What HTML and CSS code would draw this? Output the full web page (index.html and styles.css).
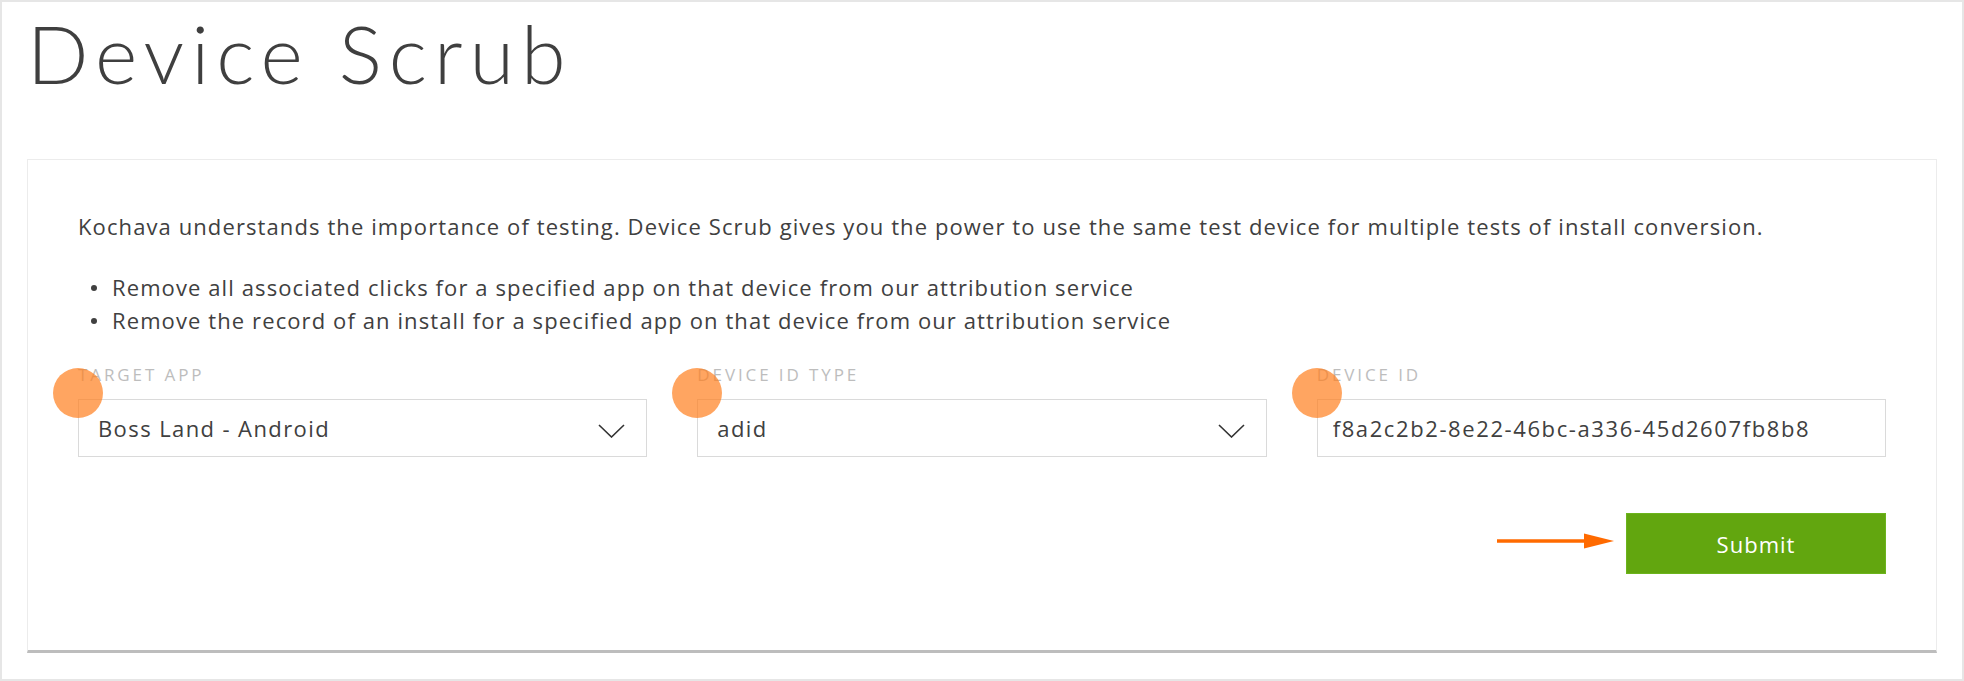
FILE: index.html
```html
<!DOCTYPE html>
<html lang="en">
<head>
<meta charset="UTF-8">
<meta name="viewport" content="width=device-width, initial-scale=1.0">
<title>Device Scrub</title>
<link rel="stylesheet" href="styles.css">
</head>
<body>

<div class="page">
    <h1 class="page-title">Device Scrub</h1>

    <div class="card">
        <p class="intro">Kochava understands the importance of testing. Device Scrub gives you the power to use the same test device for multiple tests of install conversion.</p>
        <ul class="points">
            <li>Remove all associated clicks for a specified app on that device from our attribution service</li>
            <li>Remove the record of an install for a specified app on that device from our attribution service</li>
        </ul>

        <form class="scrub-form" id="scrubForm">
            <div class="fields">
                <div class="field">
                    <span class="mark"></span>
                    <label class="field-label">TARGET APP</label>
                    <div class="select-box">
                        <span>Boss Land - Android</span>
                        <svg class="chevron" width="27" height="14" viewBox="0 0 27 14"><path d="M1 1 L13.5 13 L26 1" fill="none" stroke="#333" stroke-width="1.6"/></svg>
                    </div>
                </div>
                <div class="field">
                    <span class="mark"></span>
                    <label class="field-label">DEVICE ID TYPE</label>
                    <div class="select-box">
                        <span>adid</span>
                        <svg class="chevron" width="27" height="14" viewBox="0 0 27 14"><path d="M1 1 L13.5 13 L26 1" fill="none" stroke="#333" stroke-width="1.6"/></svg>
                    </div>
                </div>
                <div class="field">
                    <span class="mark"></span>
                    <label class="field-label" for="deviceId">DEVICE ID</label>
                    <input class="text-box" type="text" id="deviceId" value="f8a2c2b2-8e22-46bc-a336-45d2607fb8b8">
                </div>
            </div>

            <div class="actions">
                <svg class="pointer" width="117" height="16" viewBox="0 0 117 16">
                    <line x1="0" y1="8" x2="90" y2="8" stroke="#ff6a00" stroke-width="3.5"/>
                    <path d="M87 0.5 L117 8 L87 15.5 Z" fill="#ff6a00"/>
                </svg>
                <button type="button" class="submit">Submit</button>
            </div>
        </form>
    </div>
</div>

</body>
</html>
```

FILE: styles.css
```css
body {
    margin: 0;
    padding: 0;
    background: #fff;
    font-family: "Open Sans", Arial, sans-serif;
    color: #404040;
}

.page {
    height: 681px;
    box-sizing: border-box;
    border: 2px solid #e6e6e6;
    padding: 0 25px;
}

.page-title {
    margin: 10px 0 66px 0;
    font-family: Lato, "Open Sans", sans-serif;
    font-weight: 300;
    font-size: 81px;
    line-height: 81px;
    letter-spacing: 7px;
    color: #3f3f3f;
}

.card {
    border: 1px solid #ececec;
    border-bottom: 3px solid #bdbdbd;
    padding: 51px 50px 76px 50px;
}

.intro {
    margin: 0;
    font-size: 22px;
    line-height: 30px;
    letter-spacing: 1.1px;
}

.points {
    margin: 30px 0 0 0;
    padding: 0;
    list-style: none;
}

.points li {
    display: flex;
    align-items: center;
    font-size: 22px;
    line-height: 33px;
    letter-spacing: 1.1px;
}

.points li::before {
    content: "";
    flex: none;
    width: 6px;
    height: 6px;
    border-radius: 50%;
    background: #404040;
    margin: 0 15px 0 13px;
}

.scrub-form {
    margin-top: 28px;
}

.fields {
    display: grid;
    grid-template-columns: 1fr 1fr 1fr;
    gap: 50px;
}

.field {
    position: relative;
    display: flex;
    flex-direction: column;
}

.field-label {
    font-size: 17px;
    line-height: 20px;
    letter-spacing: 2.9px;
    color: #bdbdbd;
    margin-bottom: 14px;
}

.select-box,
.text-box {
    height: 58px;
    box-sizing: border-box;
    border: 1px solid #dadada;
    background: #fff;
    font-family: "Open Sans", Arial, sans-serif;
    font-size: 22px;
    letter-spacing: 1.4px;
    color: #404040;
}

.select-box {
    display: flex;
    align-items: center;
    justify-content: space-between;
    padding: 0 21px 0 19px;
}

.chevron {
    margin-top: 6px;
}

.text-box {
    width: 100%;
    padding: 0 15px;
    letter-spacing: 1.6px;
    outline: none;
}

/* orange markers on the screenshot */
.mark {
    position: absolute;
    left: -25px;
    top: 3px;
    width: 50px;
    height: 50px;
    border-radius: 50%;
    background: rgba(255, 127, 30, 0.7);
}

.actions {
    display: flex;
    justify-content: flex-end;
    align-items: center;
    margin-top: 56px;
}

.pointer {
    margin: 0 12px 5px 0;
}

.submit {
    width: 260px;
    height: 61px;
    border: 1px solid #6cb41c;
    background: #62a60f;
    color: #fff;
    font-family: "Open Sans", Arial, sans-serif;
    font-size: 22px;
    letter-spacing: 1px;
    cursor: pointer;
}
```
